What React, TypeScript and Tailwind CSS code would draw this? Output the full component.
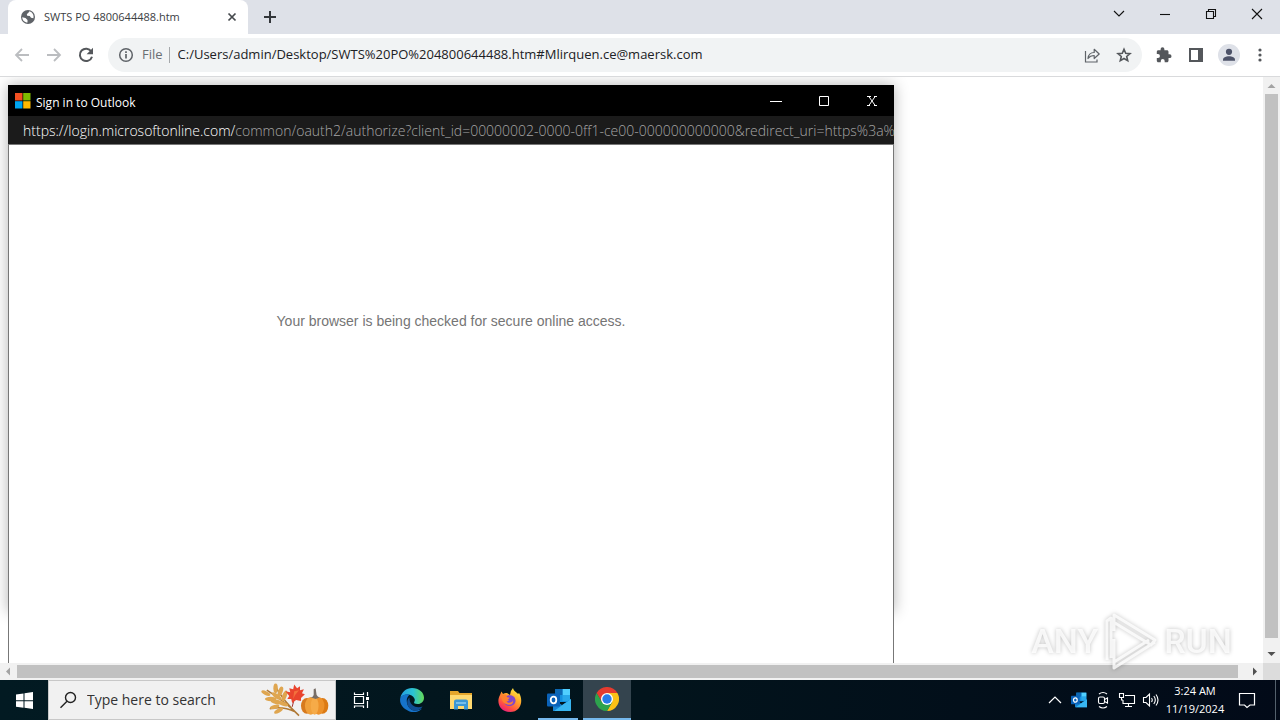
import type { ReactNode } from "react";

const CHROME_FONT = "font-['Open_Sans','Noto_Sans',sans-serif]";

function TabStrip() {
  return (
    <header className="flex h-[34px] shrink-0 items-stretch bg-[#dee1e8] pl-2">
      <div className="flex w-60 items-center rounded-t-lg bg-white pl-3 pr-2">
        <svg className="size-4 shrink-0" viewBox="0 0 16 16" aria-hidden="true">
          <circle cx="8" cy="8" r="7" fill="#5f6368" />
          <path d="M2.2 8.2 5.5 9l2 2v2.6C4.5 13.4 2.3 11 2.2 8.2ZM9.5 2.3 8 4.2 6.8 5l.4 1.8 2.6.2 1.2 1.8 2.4.5c.8-3.3-1-6-3.9-7Z" fill="#fff" />
        </svg>
        <span className="ml-2 grow text-[11px] text-[#3c4043]">SWTS PO 4800644488.htm</span>
        <button aria-label="Close tab" className="grid size-4 place-items-center">
          <svg className="size-4" viewBox="0 0 16 16" stroke="#45494d" strokeWidth="1.7">
            <path d="m4.5 4.5 7 7m0-7-7 7" />
          </svg>
        </button>
      </div>
      <button aria-label="New tab" className="ml-3 grid w-5 place-items-center">
        <svg className="size-4" viewBox="0 0 16 16" stroke="#33363a" strokeWidth="2">
          <path d="M8 2v12M2 8h12" />
        </svg>
      </button>
      <div className="ml-auto flex items-center pb-1.5">
        <WindowButton label="Search tabs"><path d="m4 6 5 5 5-5" /></WindowButton>
        <WindowButton label="Minimize"><path d="M4 9.5h10" /></WindowButton>
        <WindowButton label="Restore"><path d="M4.500 6.500h7v7h-7zM6.500 6V4.500h7v7H12" /></WindowButton>
        <WindowButton label="Close"><path d="m4 4 10 10m0-10L4 14" /></WindowButton>
      </div>
    </header>
  );
}

function WindowButton({ label, children }: { label: string; children: ReactNode }) {
  return (
    <button aria-label={label} className="grid h-7 w-[46px] place-items-center">
      <svg className="size-[18px]" viewBox="0 0 18 18" fill="none" stroke="#111" strokeWidth="1.1">{children}</svg>
    </button>
  );
}

function Toolbar() {
  return (
    <nav className="flex h-[43px] shrink-0 items-center border-b border-[#d9dadc] bg-white pl-3 pr-3">
      <div className="flex gap-3">
        <button aria-label="Back" className="size-5">
          <svg viewBox="0 0 20 20" fill="none" stroke="#bbbdc0" strokeWidth="1.8"><path d="M17 10H4m6-6-6 6 6 6" /></svg>
        </button>
        <button aria-label="Forward" className="size-5">
          <svg viewBox="0 0 20 20" fill="none" stroke="#bbbdc0" strokeWidth="1.8"><path d="M3 10h13m-6-6 6 6-6 6" /></svg>
        </button>
        <button aria-label="Reload" className="size-5">
          <svg viewBox="0 0 20 20" fill="none" stroke="#54575b" strokeWidth="2">
            <path d="M15.300 6.500A6.200 6.200 0 1 0 16 11.700" />
            <path d="M17 2.800v6.400h-6.400z" fill="#54575b" stroke="none" />
          </svg>
        </button>
      </div>
      <div className="ml-3 flex h-[34px] grow items-center rounded-full bg-[#f1f3f4] pl-2.5 pr-2">
        <svg className="size-4" viewBox="0 0 16 16" fill="none" stroke="#5f6368" strokeWidth="1.500" aria-hidden="true">
          <circle cx="8" cy="8" r="6.300" /><path d="M8 7v4.500M8 4.300v1.600" strokeWidth="1.700" />
        </svg>
        <span className="ml-2 text-[13px] text-[#6a6e72]">File</span>
        <span className="ml-1.5 h-4 w-px bg-[#a5a8ab]" />
        <input
          aria-label="Address"
          className="ml-2 min-w-0 grow bg-transparent text-[13px] text-[#202124] outline-none"
          defaultValue="C:/Users/admin/Desktop/SWTS%20PO%204800644488.htm#Mlirquen.ce@maersk.com"
        />
        <button aria-label="Share" className="size-5">
          <svg viewBox="0 0 20 20" fill="none" stroke="#5f6368" strokeWidth="1.200">
            <path d="M3.500 6v11h11.500v-2.500" />
            <path d="M6 13.500c.4-4 2.800-6 6.200-6V4.300l5 4.700-5 4.500v-3c-2.800 0-4.600.8-6.200 3Z" strokeLinejoin="round" />
          </svg>
        </button>
        <button aria-label="Bookmark this page" className="ml-3 size-5">
          <svg viewBox="0 0 20 20" fill="none" stroke="#54575b" strokeWidth="1.600">
            <path d="m10 4.300 1.700 4 4.300.4-3.300 2.800 1 4.200-3.700-2.200-3.700 2.200 1-4.200L4 8.700l4.300-.4z" />
          </svg>
        </button>
      </div>
      <div className="ml-3 flex items-center gap-3">
        <button aria-label="Extensions" className="grid size-5 place-items-center">
          <svg className="size-[18px]" viewBox="0 0 24 24" fill="#54575b">
            <path d="M19.500 11H18V7.500c0-1.100-.9-2-2-2h-3.500V4a2.500 2.500 0 0 0-5 0v1.500H4.300c-1 0-1.900.9-1.900 2v3.300H4a2.600 2.600 0 0 1 0 5.200H2.400v3.500c0 1.100.9 2 2 2h3.300v-1.600a2.600 2.600 0 0 1 5.200 0v1.600H16c1.100 0 2-.9 2-2V16h1.500a2.500 2.500 0 0 0 0-5Z" />
          </svg>
        </button>
        <button aria-label="Side panel" className="size-5">
          <svg viewBox="0 0 20 20"><path d="M3 3h14v14H3z" fill="#54575b" /><path d="M5 5h7v10H5z" fill="#fff" /></svg>
        </button>
        <div className="-mr-0.5 flex items-center gap-2.5">
          <button aria-label="Profile" className="size-[22px] rounded-full bg-[#dee1e8]">
            <svg viewBox="0 0 22 22" fill="#4c5268"><circle cx="11" cy="7.800" r="3.100" /><path d="M5 16.700v-1c0-2.200 3-3.400 6-3.400s6 1.200 6 3.400v1z" /></svg>
          </button>
          <button aria-label="Menu" className="size-5">
            <svg viewBox="0 0 20 20" fill="#54575b"><circle cx="10" cy="5" r="1.600" /><circle cx="10" cy="10" r="1.600" /><circle cx="10" cy="15" r="1.600" /></svg>
          </button>
        </div>
      </div>
    </nav>
  );
}

function Popup() {
  return (
    <section className="ml-2 mt-2 h-[527px] w-[886px] shrink-0 shadow-[0_0_14px_rgba(0,0,0,0.3)]">
      <div className="flex h-[31px] items-center bg-black pl-[7px] text-white">
        <svg className="size-4" viewBox="0 0 16 16" aria-hidden="true">
          <path d="M0 0h7.500v7.500H0z" fill="#f25022" /><path d="M8.200 0h7.300v7.500H8.200z" fill="#7fba00" />
          <path d="M0 8.200h7.500v7.300H0z" fill="#00a4ef" /><path d="M8.200 8.200h7.300v7.300H8.200z" fill="#ffb900" />
        </svg>
        <h1 className="ml-[5px] pt-1 text-xs">Sign in to Outlook</h1>
        <div className="ml-auto flex">
          <PopupButton label="Minimize"><path d="M2 8.500h12" /></PopupButton>
          <PopupButton label="Maximize"><path d="M3.500 3.500h9v9h-9z" /></PopupButton>
          <PopupButton label="Close"><path d="m4.500 3 7 10m0-10-7 10M3 3.500h4m3 0h3m-10 9h3m4 0h3" /></PopupButton>
        </div>
      </div>
      <p className="h-[29px] overflow-hidden whitespace-nowrap border-b border-[#777] bg-[#1b1b1b] pl-[15px] text-sm font-light leading-[29px] text-[#a6a6a6]">
        <span className="text-white">https://login.microsoftonline.com/</span>common/oauth2/authorize?client_id=00000002-0000-0ff1-ce00-000000000000&amp;redirect_uri=https%3a%2f
      </p>
      <div className="h-[620px] border-x border-[#777] bg-white pt-[166px] text-center font-['Liberation_Sans',sans-serif] text-sm leading-5 text-[#757575]">
        Your browser is being checked for secure online access.
      </div>
    </section>
  );
}

function PopupButton({ label, children }: { label: string; children: ReactNode }) {
  return (
    <button aria-label={label} className="grid h-[30px] w-12 place-items-center pl-1">
      <svg className="size-4" viewBox="0 0 16 16" fill="none" stroke="#fff">{children}</svg>
    </button>
  );
}

function Arrow({ d, color }: { d: string; color: string }) {
  return (
    <svg className="size-[17px] shrink-0" viewBox="0 0 17 17" fill={color} aria-hidden="true"><path d={d} /></svg>
  );
}

function Watermark() {
  return (
    <div className="pointer-events-none absolute bottom-2 right-12 flex items-center font-['Roboto',sans-serif] text-[34px] font-medium leading-none text-white/80 [filter:drop-shadow(0_0_2px_rgba(0,0,0,0.3))]">
      <span>ANY</span>
      <svg className="mx-1 h-[62px] w-[58px]" viewBox="0 0 58 62" fill="none" aria-hidden="true">
        <path d="M5 50V11l4-3v40M12 21V5l41 25-4 5-36-22M12 29v29l41-26M12 58v-6l35-22" stroke="#fff" strokeOpacity=".8" strokeWidth="3" strokeLinejoin="round" />
      </svg>
      <span>RUN</span>
    </div>
  );
}

function AutumnArt() {
  return (
    <svg className="h-9 w-[72px]" viewBox="0 0 72 36" aria-hidden="true">
      <path d="M7 8Q26 20 40 34M15 3Q24 19 40 34M10 27Q23 24 36 30" fill="none" stroke="#af7834" strokeWidth="1.500" />
      <g fill="#dfa650">
        <ellipse cx="6" cy="11" rx="5" ry="2" transform="rotate(25 6 11)" />
        <ellipse cx="11" cy="17" rx="6" ry="2.300" />
        <ellipse cx="17" cy="20" rx="6" ry="2.300" transform="rotate(10 17 20)" />
        <ellipse cx="16" cy="6" rx="2.300" ry="5" />
        <ellipse cx="21" cy="9" rx="2.300" ry="5" transform="rotate(20 21 9)" />
        <ellipse cx="25" cy="14" rx="2.300" ry="6" transform="rotate(20 25 14)" />
        <ellipse cx="17" cy="14" rx="6" ry="2.300" transform="rotate(35 17 14)" />
        <ellipse cx="15" cy="25" rx="5" ry="2" transform="rotate(-15 15 25)" />
        <ellipse cx="19" cy="29" rx="5" ry="2" transform="rotate(-30 19 29)" />
        <ellipse cx="24" cy="22" rx="5" ry="2" transform="rotate(20 24 22)" />
      </g>
      <path d="M33 25 36 13" stroke="#9e2929" />
      <path d="m35 2 3 4 3-2 0 4 4-1-2 4 3 1-4 4 0 3-5-1-4 3-1-4-4 0 2-3-4-5 5 1-1-4 4 1z" fill="#e9442d" />
      <path d="m34 17 1-8 5-1-4 5z" fill="#f3703c" />
      <ellipse cx="48" cy="24" rx="6" ry="8" fill="#d77a1e" /><ellipse cx="64" cy="24" rx="6" ry="8" fill="#dc7b15" />
      <ellipse cx="52" cy="24" rx="6" ry="9" fill="#f0a03b" /><ellipse cx="60" cy="24" rx="6" ry="9" fill="#ed922b" />
      <ellipse cx="56" cy="24" rx="4" ry="9" fill="#f6ab48" />
      <path d="M51 15q3 1 4-2V7l2-1 1 7q2 3 4 2l-5 2z" fill="#786e67" />
    </svg>
  );
}

function OutlookIcon({ className }: { className: string }) {
  return (
    <svg className={className} viewBox="0 0 24 24" aria-hidden="true">
      <path d="M8 1h15v13H8z" fill="#1490df" /><path d="M15.500 1H23v6h-7.500z" fill="#50d0ff" />
      <path d="M8 1h7.500v6H8z" fill="#0c68b4" /><path d="M15.500 7H23v6h-7.500z" fill="#28a8ea" />
      <path d="m6 11 9 6 9-6v12H6z" fill="#1683d2" /><path d="m24 11-17 12h17z" fill="#38b6f1" />
      <rect y="5.500" width="13" height="13" rx="1" fill="#0a62b8" />
      <ellipse cx="6.500" cy="12" rx="2.800" ry="3.300" fill="none" stroke="#fff" strokeWidth="1.800" />
    </svg>
  );
}

function TaskButton({ label, className, children }: { label: string; className: string; children: ReactNode }) {
  return (
    <button aria-label={label} className={`grid h-10 place-items-center ${className}`}>{children}</button>
  );
}

function Taskbar() {
  return (
    <footer className="flex h-10 shrink-0 items-stretch bg-linear-to-r from-[#021a22] via-[#02141c] to-[#020a18] text-white">
      <TaskButton label="Start" className="w-12">
        <svg className="size-[17px]" viewBox="0 0 17 17" fill="#fff"><path d="m0 2.500 7.500-1v6.800H0zM8.500 1.300 17 0v8.300H8.500zM0 9.300h7.500v6.500L0 14.700zm8.500 0H17V17l-8.500-1.200z" /></svg>
      </TaskButton>
      <label className="flex w-72 items-center border border-[#c8c8c8] bg-[#f1f1f1] pl-[10px] pr-[5px]">
        <svg className="size-[18px] shrink-0" viewBox="0 0 18 18" fill="none" stroke="#222" strokeWidth="1.400" aria-hidden="true">
          <circle cx="11.500" cy="6.500" r="5" /><path d="M8 10.200 1.500 16.700" />
        </svg>
        <input aria-label="Search" placeholder="Type here to search" className="ml-[10px] min-w-0 grow bg-transparent text-sm outline-none placeholder:text-[#333]" />
        <AutumnArt />
      </label>
      <TaskButton label="Task view" className="w-[49px]">
        <svg className="size-[18px]" viewBox="0 0 18 18" fill="none" stroke="#fff" strokeWidth="1.200">
          <path d="M2.500 5.500h9v7h-9zM2.500 1.500v2h9v-2M2.500 17v-2h9v2M15.500 1v4m0 5v7" /><path d="M14 6h3v3h-3z" fill="#fff" stroke="none" />
        </svg>
      </TaskButton>
      <TaskButton label="Microsoft Edge" className="w-[49px] pl-1">
        <svg className="size-6" viewBox="0 0 24 24">
          <defs><linearGradient id="edgeTop"><stop stopColor="#249de2" /><stop offset=".55" stopColor="#2bc3d2" /><stop offset="1" stopColor="#65d956" /></linearGradient></defs>
          <path d="M.3 10C1.500 4 6.300 0 12 0c7 0 12 4.500 12 9.700 0 4-3.200 6.300-6.500 6.300-2.600 0-4-.9-3.300-2 .8-1.200.7-2.500.2-3.500C12.300 5.800 4 5 .3 10Z" fill="url(#edgeTop)" />
          <path d="M.3 10c1.900-3.400 6-4.300 9.200-3.300C5.500 9.500 6 17 10 20.500c4 3.500 9 2 12 .1-3 3.700-8.500 4.500-13 2.600C2 20.500-.8 15 .3 10Z" fill="#1673ca" />
          <path d="M9.500 9.500C5.500 12.500 7 19.500 12 22c4 2 8.500 0 10.600-3.500-3.300 1.400-7.600.9-10-1.200-2.700-2.200-3.300-5-3.100-7.800Z" fill="#104e93" />
        </svg>
      </TaskButton>
      <TaskButton label="File Explorer" className="w-[49px] pl-1">
        <svg className="h-5 w-[22px]" viewBox="0 0 22 20">
          <path d="M0 1h8l1.500 2H22v5H0z" fill="#e5a62c" /><path d="M0 5h22v14H0z" fill="#ffd970" />
          <path d="M4 19.500v-8q0-2 2-2h10q2 0 2 2v8h-4V16H8v3.500z" fill="#3b97d4" /><path d="M6 12h10v2H6z" fill="#76bfeb" />
        </svg>
      </TaskButton>
      <TaskButton label="Firefox" className="w-[49px] pl-1">
        <svg className="size-6" viewBox="0 0 24 24">
          <defs><linearGradient id="foxFire" x1=".8" y1="0" x2=".2" y2="1"><stop stopColor="#ffef43" /><stop offset=".4" stopColor="#ffa42b" /><stop offset=".75" stopColor="#ff4c45" /><stop offset="1" stopColor="#e31587" /></linearGradient></defs>
          <path d="M3.500 3.500 5 6q2-1.500 4-1l3 2q0-4 3-7c.5 3 3.500 4 5 6l1-1c5 8 1.500 19-9 19S-2 14 2 7z" fill="url(#foxFire)" />
          <path d="M8 8.500C11 6 17 7 17.500 12c.5 4-3 6-6 6s-5.500-2-5.500-5c2 1.500 4 .5 5-1-2 0-3-1.500-3-3.500Z" fill="#8146cc" />
          <path d="m3 5 2 2q3-1 4 .5c-1 1 0 2 2.500 2-.5 2-2.500 2-3 3.500C9 16 15 15 15 12c1 4-3 6-7 4-3-1-5-4-5-11Z" fill="#ff812e" />
        </svg>
      </TaskButton>
      <TaskButton label="Outlook" className="relative w-[49px] pl-1 after:absolute after:bottom-0 after:left-1.5 after:h-0.5 after:w-10 after:bg-[#76b9ed]">
        <OutlookIcon className="size-6" />
      </TaskButton>
      <TaskButton label="Google Chrome" className="ml-0.5 w-12 border-b-2 border-[#76b9ed] bg-[#34444e]">
        <svg className="size-6" viewBox="0 0 24 24">
          <path d="M1.600 6A12 12 0 0 1 22.400 6H12L6.800 15z" fill="#e53b2f" />
          <path d="M22.400 6A12 12 0 0 1 12 24l5.200-9L12 6z" fill="#fbc116" />
          <path d="M12 24A12 12 0 0 1 1.600 6l5.200 9h10.400z" fill="#2da34d" />
          <circle cx="12" cy="12" r="6" fill="#fff" /><circle cx="12" cy="12" r="4.700" fill="#287ce9" />
        </svg>
      </TaskButton>
      <div className="ml-auto flex items-center">
        <button aria-label="Show hidden icons" className="grid w-6 place-items-center">
          <svg className="size-4" viewBox="0 0 16 16" fill="none" stroke="#fff" strokeWidth="1.200"><path d="m2 11 6-6 6 6" /></svg>
        </button>
        <button aria-label="Outlook notifications" className="grid w-6 place-items-center"><OutlookIcon className="size-4" /></button>
        <button aria-label="Meet now" className="grid w-6 place-items-center">
          <svg className="size-[18px]" viewBox="0 0 18 18" fill="none" stroke="#fff" strokeWidth="1.100">
            <rect x="4.500" y="6" width="6" height="6.500" rx="1.500" /><path d="m10.500 8.500 3-1.500v5l-3-1.500M5 3q4-3 8 0M5 15.500q4 3 8 0" />
          </svg>
        </button>
        <button aria-label="Network" className="grid w-6 place-items-center">
          <svg className="size-[18px]" viewBox="0 0 18 18" fill="none" stroke="#fff" strokeWidth="1.100">
            <path d="M7 4.500h9.500v8H5V9m5.500 3.500v3M7 15.500h7M1.500 2.500h4v4h-4zM3.500 6.500v3M3.500 9H5" />
          </svg>
        </button>
        <button aria-label="Volume" className="grid w-6 place-items-center">
          <svg className="size-[18px]" viewBox="0 0 18 18" fill="none" stroke="#fff" strokeWidth="1.100">
            <path d="M1.500 6.500H4L7.500 3v12L4 11.500H1.500zM9.500 7q1.500 2 0 4M11.800 5q3 4 0 8M14 3.500q4 5.500 0 11" />
          </svg>
        </button>
        <button className="w-16 text-center text-[11px] leading-[18px]"><time dateTime="2024-11-19T03:24">3:24 AM<br />11/19/2024</time></button>
        <button aria-label="Notifications" className="grid w-10 place-items-center">
          <svg className="size-[18px]" viewBox="0 0 18 18" fill="none" stroke="#fff" strokeWidth="1.200"><path d="M1.500 2.500h15v11.500H12L9 16.500 6.500 14h-5z" /></svg>
        </button>
        <span className="ml-2 h-10 w-px bg-[#53606c]" />
        <span className="w-1" />
      </div>
    </footer>
  );
}

export default function App() {
  return (
    <div className={`flex h-screen flex-col overflow-hidden bg-white ${CHROME_FONT}`}>
      <TabStrip />
      <Toolbar />
      <main className="relative flex min-h-0 grow flex-col">
        <div className="flex min-h-0 grow">
          <div className="min-w-0 grow overflow-hidden"><div className="flex"><Popup /></div></div>
          <div className="flex w-[17px] shrink-0 flex-col bg-[#f1f1f1]">
            <Arrow d="m4.500 11 4-4 4 4z" color="#a3a3a3" />
            <div className="mx-0.5 mb-2 grow bg-[#c1c1c1]" />
            <Arrow d="m4.500 6 4 4 4-4z" color="#505050" />
          </div>
        </div>
        <div className="flex h-[17px] shrink-0 bg-[#f1f1f1]">
          <Arrow d="m10 4.500-4 4 4 4z" color="#a3a3a3" />
          <div className="my-0.5 mr-2 grow bg-[#c1c1c1]" />
          <Arrow d="m7 4.500 4 4-4 4z" color="#505050" />
          <div className="w-[17px] bg-[#dcdcdc]" />
        </div>
        <Watermark />
      </main>
      <Taskbar />
    </div>
  );
}
